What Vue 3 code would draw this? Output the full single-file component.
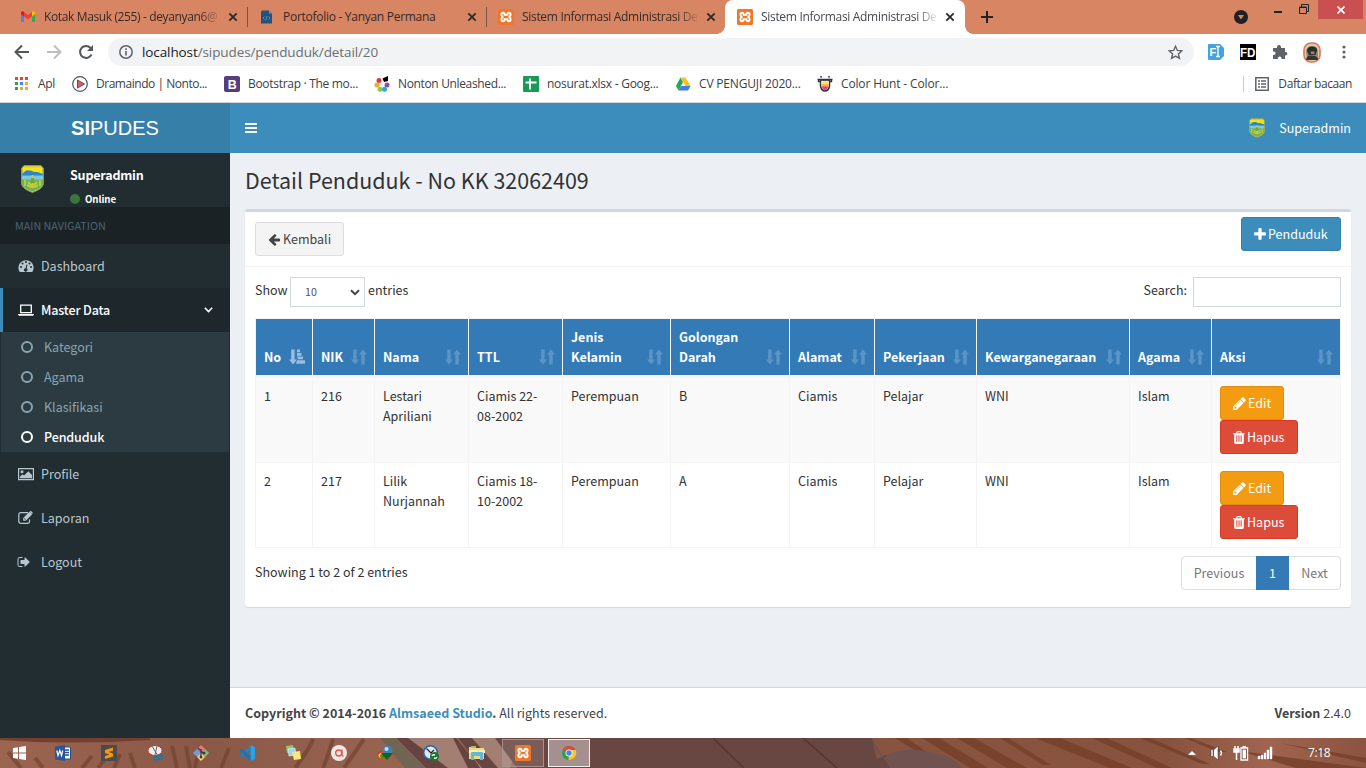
<script setup>
import { h } from 'vue'

const fa = {
  left: 'M1664 896v128q0 53-32.5 90.5t-84.5 37.5h-704l293 294q38 36 38 90t-38 90l-75 76q-37 37-90 37-52 0-91-37l-651-652q-37-37-37-90 0-52 37-91l651-650q38-38 91-38 52 0 90 38l75 74q38 38 38 91t-38 91l-293 293h704q52 0 84.5 37.5t32.5 90.5z',
  plus: 'M1600 736v192q0 40-28 68t-68 28h-416v416q0 40-28 68t-68 28h-192q-40 0-68-28t-28-68v-416h-416q-40 0-68-28t-28-68v-192q0-40 28-68t68-28h416v-416q0-40 28-68t68-28h192q40 0 68 28t28 68v416h416q40 0 68 28t28 68z',
  pencil: 'M491 1536l91-91-235-235-91 91v107h128v128h107zm523-928q0-22-22-22-10 0-17 7l-542 542q-7 7-7 17 0 22 22 22 10 0 17-7l542-542q7-7 7-17zm-54-192l416 416-832 832h-416v-416zm683 96q0 53-37 90l-166 166-416-416 166-165q36-38 90-38 53 0 91 38l235 234q37 39 37 91z',
  trash: 'M704 1376v-704q0-14-9-23t-23-9h-64q-14 0-23 9t-9 23v704q0 14 9 23t23 9h64q14 0 23-9t9-23zm256 0v-704q0-14-9-23t-23-9h-64q-14 0-23 9t-9 23v704q0 14 9 23t23 9h64q14 0 23-9t9-23zm256 0v-704q0-14-9-23t-23-9h-64q-14 0-23 9t-9 23v704q0 14 9 23t23 9h64q14 0 23-9t9-23zm-544-992h448l-48-117q-7-9-17-11h-317q-10 2-17 11zm928 32v64q0 14-9 23t-23 9h-96v948q0 83-47 143.500t-113 60.500h-832q-66 0-113-58.500t-47-141.500v-952h-96q-14 0-23-9t-9-23v-64q0-14 9-23t23-9h309l70-167q15-37 54-63t79-26h320q40 0 79 26t54 63l70 167h309q14 0 23 9t9 23z',
  logout: 'M704 1440q0 4 1 20t.5 26.500-3 23.500-10 19.500-20.500 6.500h-320q-119 0-203.500-84.500t-84.500-203.500v-704q0-119 84.500-203.500t203.500-84.500h320q13 0 22.500 9.500t9.500 22.500q0 4 1 20t.5 26.500-3 23.500-10 19.500-20.500 6.500h-320q-66 0-113 47t-47 113v704q0 66 47 113t113 47h312l11.500 1 11.500 3 8 5.500 7 9 2 13.500zm928-544q0 26-19 45l-544 544q-19 19-45 19t-45-19-19-45v-288h-448q-26 0-45-19t-19-45v-384q0-26 19-45t45-19h448v-288q0-26 19-45t45-19 45 19l544 544q19 19 19 45z',
}
const boxes = { left: '64 0 1728 1792', plus: '192 0 1408 1792', pencil: '128 0 1536 1792', trash: '192 0 1408 1792', logout: '0 0 1792 1792' }
const Fa = (p) => h('svg', { viewBox: boxes[p.name], width: 14, height: 14, fill: 'currentColor' }, [h('path', { d: fa[p.name] })])
Fa.props = ['name']

const Xampp = () => h('svg', { viewBox: '0 0 16 16', width: 16, height: 16 }, [
  h('rect', { width: 16, height: 16, rx: 1.5, fill: '#f0762a' }),
  h('path', { d: 'M6.600 5.800Q6.600 3.700 5 3.700 3.400 3.700 3.400 5.500 3.400 7 4.600 8 3.400 9 3.400 10.500 3.400 12.300 5 12.300 6.600 12.300 6.600 10.200H9.400Q9.400 12.300 11 12.300 12.600 12.300 12.600 10.500 12.600 9 11.400 8 12.600 7 12.600 5.500 12.600 3.700 11 3.700 9.400 3.700 9.400 5.800Z', fill: 'none', stroke: '#fff', 'stroke-width': 1.9 }),
])

const Crest = () => h('svg', { viewBox: '0 0 23 28' }, [
  h('path', { d: 'M3 .5h17l2.500 3V19q-1 5-11 8.500Q1.500 24 .5 19V3.500z', fill: '#d9ca3e', stroke: '#8d9b62', 'stroke-width': 0.8 }),
  h('path', { d: 'M1 4h21v15q-1 4-10.500 7.600Q2 23 1 19z', fill: '#6cb35a' }),
  h('path', { d: 'M1.500 2.500h20v6h-20z', fill: '#f5e21e' }),
  h('path', { d: 'M1 9.500Q5 4.500 8 5.500q3-.5 5 1.500 4-1 9 2.500V12H1z', fill: '#2d86c8' }),
  h('path', { d: 'M1 10.500h21v4H1z', fill: '#7cc8dc' }),
  h('path', { d: 'M11.500 10v12M7 17q4.500 6 9 0M6 20q5.500 4 11 0M4 15v6M19 15v6', fill: 'none', stroke: '#cdd233', 'stroke-width': 1.6 }),
  h('path', { d: 'M10 13h3v5h-3z', fill: '#8a9a2c' }),
])

const tabs = [
  { id: 'gmail', title: 'Kotak Masuk (255) - deyanyan6@', fade: true },
  { id: 'porto', title: 'Portofolio - Yanyan Permana' },
  { id: 'xampp', title: 'Sistem Informasi Administrasi De', fade: true },
  { id: 'xampp', title: 'Sistem Informasi Administrasi De', fade: true, active: true },
]
const subs = ['Kategori', 'Agama', 'Klasifikasi', 'Penduduk']
const heads = ['No', 'NIK', 'Nama', 'TTL', 'Jenis Kelamin', 'Golongan Darah', 'Alamat', 'Pekerjaan', 'Kewarganegaraan', 'Agama', 'Aksi']
const rows = [
  ['1', '216', 'Lestari Apriliani', 'Ciamis 22-08-2002', 'Perempuan', 'B', 'Ciamis', 'Pelajar', 'WNI', 'Islam'],
  ['2', '217', 'Lilik Nurjannah', 'Ciamis 18-10-2002', 'Perempuan', 'A', 'Ciamis', 'Pelajar', 'WNI', 'Islam'],
]
</script>

<template>
  <div class="screen">
    <div class="tabstrip">
      <div v-for="(t, i) in tabs" :key="i" class="tab" :class="{ active: t.active }">
        <svg v-if="t.id === 'gmail'" class="fav" viewBox="0 0 16 16"><path fill="#4285f4" d="M1 4v9h3V7z" /><path fill="#34a853" d="M12 7v6h3V4z" /><path fill="#ea4335" d="M4 3l4 3 4-3v4.500L8 10.500 4 7.500z" /><path fill="#c5221f" d="M1 4q0-2 2-1.700L4 3v4.500L1 5.300z" /><path fill="#fbbc04" d="M15 4q0-2-2-1.700L12 3v4.500l3-2.200z" /></svg>
        <svg v-else-if="t.id === 'porto'" class="fav" viewBox="0 0 16 16"><path fill="#23527c" d="M3 1.500h7l3 3V14.500H2V2.500z" /><path fill="#6f93b3" d="M10 1.500v3h3z" /><path d="M5.500 7.500L4 9l1.500 1.500M9.500 7.500L11 9l-1.500 1.500M8.200 7L6.800 11" fill="none" stroke="#7794ad" stroke-width=".8" /></svg>
        <Xampp v-else class="fav" />
        <span class="title" :class="{ fade: t.fade }">{{ t.title }}</span>
        <svg class="x" viewBox="0 0 10 10"><path d="M1.300 1.300l7.400 7.400M8.700 1.300L1.300 8.700" stroke="currentColor" stroke-width="1.800" /></svg>
      </div>
      <svg class="newtab" viewBox="0 0 12 12"><path d="M6 0v12M0 6h12" stroke="#222" stroke-width="2" /></svg>
      <div class="winctl">
        <svg class="down" viewBox="0 0 14 14"><circle cx="7" cy="7" r="7" fill="#202124" /><path d="M4 5h6L7 9.500z" fill="#d78562" /></svg>
        <svg class="min" viewBox="0 0 8 2"><path d="M0 0h8v2H0z" fill="#222" /></svg>
        <svg class="rest" viewBox="0 0 10 10"><path d="M.5 3.500h7v6h-7zM.5 3h7M2.500 3V.5h7v7H8" fill="none" stroke="#222" /></svg>
        <div class="close"><svg viewBox="0 0 8 8"><path d="M.5.5l7 7M7.500.5l-7 7" stroke="#fff" stroke-width="1.700" /></svg></div>
      </div>
    </div>

    <div class="toolbar">
      <svg class="nav" viewBox="0 0 16 16"><path d="M15 8H2M8 1.500L1.500 8 8 14.500" fill="none" stroke="#54585c" stroke-width="2" /></svg>
      <svg class="nav" viewBox="0 0 16 16"><path d="M1 8h13M8 1.500L14.500 8 8 14.500" fill="none" stroke="#bcbec0" stroke-width="2" /></svg>
      <svg class="nav" viewBox="0 0 16 16"><path d="M13.500 10.500A6 6 0 1 1 12.600 4" fill="none" stroke="#54585c" stroke-width="2" /><path d="M15 1v6H9z" fill="#54585c" /></svg>
      <div class="omni">
        <svg class="info" viewBox="0 0 14 14"><circle cx="7" cy="7" r="6.200" fill="none" stroke="#5f6368" stroke-width="1.500" /><path d="M6.200 6h1.600v4.500H6.200zM6.200 3.300h1.600v1.600H6.200z" fill="#5f6368" /></svg>
        <span class="url"><b>localhost</b>/sipudes/penduduk/detail/20</span>
        <svg class="star" viewBox="0 0 14 14"><path d="M7 1.200l1.700 3.900 4.200.4-3.200 2.800 1 4.200L7 10.300l-3.700 2.200 1-4.200L1.100 5.500l4.200-.4z" fill="none" stroke="#5f6368" stroke-width="1.300" /></svg>
      </div>
      <div class="ext">
        <svg width="16" height="16" viewBox="0 0 16 16"><path d="M1 0h11l4 4v8l-4 4H1q-1 0-1-1V1q0-1 1-1z" fill="#41a3e0" /><text x="1.500" y="12" font-size="11" font-weight="bold" fill="#fff">F</text><path d="M8 2.500h4M8 12.500h4M10 2.500v10" stroke="#fff" stroke-width="1.300" /></svg>
        <svg width="16" height="16" viewBox="0 0 16 16"><path d="M0 0h16v16H0z" /><text x="0" y="12.500" font-size="12" font-weight="bold" fill="#fff" textLength="15.500" lengthAdjust="spacingAndGlyphs">FD</text></svg>
        <svg width="16" height="16" viewBox="0 0 16 16"><path d="M1 4h4V3a2 2 0 0 1 4 0v1h4v4h.6a1.800 1.800 0 0 1 0 3.600H13V15H9.500v-.8a1.800 1.800 0 0 0-3.600 0v.8H1v-4h.8a1.700 1.700 0 0 0 0-3.500H1z" fill="#5f6368" /></svg>
        <svg width="18" height="21" viewBox="0 0 18 21"><rect x="1" y="1" width="16" height="19" rx="7" fill="#d9cdb8" stroke="#e2724c" stroke-width="1.600" /><path d="M3 10q0-6 6-6t6 6v8H4z" fill="#8f8a72" /><path d="M4 9q0-4.500 5-4.500t5 4L12.500 13H6z" fill="#27302a" /><path d="M7.500 9.500h4v2.500H8z" fill="#a58260" /><path d="M3 18q1-5 4-4.500l5 .5q3 1 3 4z" fill="#34362b" /></svg>
        <svg width="4" height="14" viewBox="0 0 4 14" fill="#5f6368"><circle cx="2" cy="2" r="1.600" /><circle cx="2" cy="7" r="1.600" /><circle cx="2" cy="12" r="1.600" /></svg>
      </div>
    </div>

    <div class="bookmarks">
      <div class="bm b1"><svg viewBox="0 0 14 14"><path fill="#ea4335" d="M0 0h3v3H0zM5 0h3v3H5zM10 0h3v3h-3z" /><path fill="#34a053" d="M0 5h3v3H0zM0 10h3v3H0z" /><path fill="#4285f4" d="M5 5h3v3H5z" /><path fill="#f5a81c" d="M10 5h3v3h-3zM5 10h3v3H5zM10 10h3v3h-3z" /></svg>Apl</div>
      <div class="bm b2"><svg viewBox="0 0 16 16"><circle cx="8" cy="8" r="7.300" fill="#fff" stroke="#50555a" stroke-width="1.200" /><path d="M5.500 4l7 4-7 4z" fill="#e45c63" stroke="#50555a" /></svg>Dramaindo | Nonto...</div>
      <div class="bm b3"><svg viewBox="0 0 16 16"><rect width="16" height="16" rx="2" fill="#563d7c" /><text x="3.700" y="12.600" font-size="12.500" font-weight="bold" fill="#fff">B</text></svg>Bootstrap · The mo...</div>
      <div class="bm b4"><svg viewBox="0 0 16 16"><circle cx="5" cy="4.500" r="2.500" fill="#e2343e" /><circle cx="3" cy="9" r="2.500" fill="#f2a72b" /><circle cx="6" cy="13.300" r="2.500" fill="#91c83e" /><circle cx="10.500" cy="13.300" r="2.500" fill="#29a8df" /><circle cx="13" cy="9" r="2.500" fill="#8c4fa5" /><path d="M8.500 2.500L14 0v5l-4 1z" /><circle cx="8.200" cy="8.700" r="2" fill="#fff" /></svg>Nonton Unleashed...</div>
      <div class="bm b5"><svg viewBox="0 0 16 16"><rect width="16" height="16" rx="1" fill="#169c55" /><path d="M2.500 6.500h11M7 2.500v11" stroke="#fff" stroke-width="2" /></svg>nosurat.xlsx - Goog...</div>
      <div class="bm b6"><svg viewBox="0 0 16 16"><path d="M5.500 1.500L1 10l2.500 4.500L8 6z" fill="#22a55a" /><path d="M5.500 1.500h5L15.500 10h-5z" fill="#fbc01c" /><path d="M5.800 10h9.700L13 14.500H3.500z" fill="#3f7ee8" /></svg>CV PENGUJI 2020...</div>
      <div class="bm b7"><svg viewBox="0 0 16 16"><path d="M3.500 4h9v6q-1 5-4.500 5t-4.500-5z" fill="#fff" stroke="#2d3142" stroke-width="1.500" /><path d="M4.300 5h7.400v3H4.300z" fill="#f9ed52" /><path d="M4.300 8h7.400v3H4.500z" fill="#ffad63" /><path d="M4.800 10.500h6.400q-1 3.500-3.200 3.500t-3.200-3.500z" fill="#e83e72" /><path d="M.5 3.500h15M1.500 3.500v2h2M14.500 3.500v2h-2M3 .8h2M11 .8h2" fill="none" stroke="#2d3142" stroke-width="1.300" /></svg>Color Hunt - Color...</div>
      <div class="reading"><svg viewBox="0 0 14 14"><path d="M.8.8h12.400v12.400H.8z" fill="none" stroke="#5f6368" stroke-width="1.500" /><path d="M3 4h2M6 4h5M3 7h2M6 7h5M3 10h2M6 10h5" stroke="#5f6368" stroke-width="1.500" /></svg>Daftar bacaan</div>
    </div>

    <div class="page">
      <aside>
        <div class="logo"><b>SI</b>PUDES</div>
        <div class="user">
          <Crest class="crest" />
          <div><p class="uname">Superadmin</p><p class="online"><i></i>Online</p></div>
        </div>
        <div class="mainnav">MAIN NAVIGATION</div>
        <div class="item">
          <svg viewBox="0 0 16 14"><path fill="currentColor" fill-rule="evenodd" d="M1.700 13A7.600 7.600 0 1 1 14.300 13zM2 8a1 1 0 1 0 2 0 1 1 0 1 0-2 0M3.500 4.500a1 1 0 1 0 2 0 1 1 0 1 0-2 0M7 3a1 1 0 1 0 2 0 1 1 0 1 0-2 0M10.500 4.500a1 1 0 1 0 2 0 1 1 0 1 0-2 0M12 8a1 1 0 1 0 2 0 1 1 0 1 0-2 0M8.600 5.500L7.500 9.200a1.700 1.700 0 1 0 1.200.3l.8-3.800z" /></svg>
          <span>Dashboard</span>
        </div>
        <div class="item open">
          <svg viewBox="0 0 16 14"><path d="M2.700 2.100h10.600v7.600H2.700z" fill="none" stroke="currentColor" stroke-width="1.300" /><path d="M0 11h16v.7l-1 1H1l-1-1z" fill="currentColor" /></svg>
          <span>Master Data</span>
          <svg class="chev" viewBox="0 0 9 6"><path d="M.8.8l3.700 3.700L8.200.8" fill="none" stroke="#fff" stroke-width="1.600" /></svg>
        </div>
        <div class="submenu">
          <div v-for="s in subs" :key="s" class="sub" :class="{ on: s === 'Penduduk' }"><i></i>{{ s }}</div>
        </div>
        <div class="item">
          <svg viewBox="0 0 16 14"><path d="M.6 1.600h14.800v11H.6z" fill="none" stroke="currentColor" stroke-width="1.200" /><circle cx="4" cy="4.700" r="1.500" fill="currentColor" /><path d="M2 11.300V9.500l2.500-2.300L6 8.500l4.300-4.200L14 8v3.300z" fill="currentColor" /></svg>
          <span>Profile</span>
        </div>
        <div class="item">
          <svg viewBox="0 0 16 14"><path d="M10 1.600H3Q.8 1.600.8 3.700v6.500q0 2.100 2.200 2.100h6.300q2.200 0 2.200-2.100V8.400" fill="none" stroke="currentColor" stroke-width="1.200" /><path d="M5.200 9.700V7L11.400.8l2.600 2.600L7.900 9.700zM12 .3q.8-.6 1.400 0l1 1q.7.800 0 1.400l-.4.400L11.600.7z" fill="currentColor" /><path d="M6.200 7.500l1.400 1.400" stroke="#222d32" /></svg>
          <span>Laporan</span>
        </div>
        <div class="item"><Fa name="logout" class="out" /><span>Logout</span></div>
      </aside>

      <main>
        <nav>
          <svg class="bars" viewBox="0 0 12 10"><path d="M0 0h12v2H0zM0 4h12v2H0zM0 8h12v2H0z" fill="#fff" /></svg>
          <div class="who"><Crest class="mini" />Superadmin</div>
        </nav>
        <section>
          <h1>Detail Penduduk - No KK 32062409</h1>
          <div class="box">
            <div class="boxhead">
              <button class="btn back"><Fa name="left" /> Kembali</button>
              <button class="btn add"><Fa name="plus" /> Penduduk</button>
            </div>
            <div class="controls">
              <span>Show</span>
              <div class="select">10<svg viewBox="0 0 10 7"><path d="M1 1.200l4 4 4-4" fill="none" stroke="#444" stroke-width="2" /></svg></div>
              <span>entries</span>
              <span class="search">Search:</span><div class="field"></div>
            </div>
            <table>
              <colgroup><col v-for="(c, i) in heads" :key="c" :class="'c' + i" /></colgroup>
              <thead>
                <tr>
                  <th v-for="(c, i) in heads" :key="c"><div class="th"><span>{{ c }}</span>
                    <svg v-if="i === 0" class="asc" viewBox="0 0 16 16"><path d="M2.200.5h3.400v10H8L4 15.500 0 10.500h2.200zM8 .5h3v2.700H8zM8 4h4.500v2.700H8zM8 7.600h6v2.700H9zM8 11.200h8v3.500H7z" fill="#fff" /></svg>
                    <svg v-else viewBox="0 0 16 16"><path d="M2.200.5h3.400v10H8L4 15.500 0 10.500h2.200zM10.300 15.500h3.400V5.500H16L12 .5 8 5.500h2.300z" fill="#fff" /></svg>
                  </div></th>
                </tr>
              </thead>
              <tbody>
                <tr v-for="r in rows" :key="r[0]">
                  <td v-for="(c, i) in r" :key="i">{{ c }}</td>
                  <td class="act"><button class="btn edit"><Fa name="pencil" /> Edit</button><button class="btn del"><Fa name="trash" /> Hapus</button></td>
                </tr>
              </tbody>
            </table>
            <div class="foot">
              <span class="showing">Showing 1 to 2 of 2 entries</span>
              <div class="pager"><span class="prev">Previous</span><span class="cur">1</span><span class="next">Next</span></div>
            </div>
          </div>
        </section>
        <footer><span><b>Copyright © 2014-2016 <em>Almsaeed Studio</em>.</b> All rights reserved.</span><span class="ver"><b>Version</b> 2.4.0</span></footer>
      </main>
    </div>

    <div class="taskbar">
      <svg class="wall" viewBox="0 0 1366 30" preserveAspectRatio="none">
        <defs>
          <linearGradient id="wg" x1="0" x2="1"><stop offset="0" stop-color="#9c6550" /><stop offset=".15" stop-color="#8a5847" /><stop offset=".28" stop-color="#966450" /><stop offset="1" stop-color="#8c5842" /></linearGradient>
          <linearGradient id="wr" x1="0" x2="1"><stop offset="0" stop-color="#87543f" /><stop offset=".6" stop-color="#87533e" /><stop offset=".8" stop-color="#a06450" /><stop offset="1" stop-color="#8a5440" /></linearGradient>
        </defs>
        <path d="M0 0h1366v30H0z" fill="url(#wg)" />
        <path d="M0 2q70 5 150 0v-2H0z" fill="#743f2e" />
        <g stroke="#6f4030" stroke-width="4" fill="none" opacity=".65"><path d="M8 14l13 16M35 20l8 10M82 30l10-12M98 30l10-13M114 30l6-14M135 30l-5-15M172 8l5 22M186 8l4 22M198 14l-3 16M221 30l8-20M295 30q15-20 18-29M323 30q7-18 10-29M344 30l20-29" /></g>
        <path d="M380 0h15l30 30h-20z" fill="#706453" />
        <path d="M396 0h60l25 30h-55z" fill="#654340" />
        <path d="M408 0h45l15 30h-20zM462 0h58l-10 30h-30z" fill="#a27e73" />
        <path d="M458 0h14l26 30h-16z" fill="#684543" />
        <path d="M495 0l22 30h375V0z" fill="#684743" />
        <path d="M713 0l31 30M803 0l34 30" stroke="#55352f" stroke-width="1.500" />
        <path d="M872 0h494v30H960q-30-20-75-13l-8 4z" fill="url(#wr)" />
        <g fill="#743e29" opacity=".8"><path d="M895 0h12l24 17h-9zM922 0h17l49 30h-18zM957 0h17l53 30h-20zM1000 0h8l43 27h-8zM1035 0h25l72 30h-22zM1092 0h15l65 30h-15zM1140 0h10l60 26h-8zM1185 0h6l36 14h-9zM1240 13l126 17h-70zM1280 5l86 15v5z" /></g>
        <path d="M872 0q5 22 13 19 15-13 55-3 15 4 22 14H890z" fill="#705350" />
      </svg>
      <div class="slot start"><svg viewBox="0 0 16 16"><path d="M2 3l5-.8v5.300H2zM8 2l7-1v6.500H8zM2 8.500h5v5.300L2 13zM8 8.500h7V15l-7-1z" fill="#fff" /></svg></div>
      <div class="slot"><svg viewBox="0 0 16 16"><path d="M8 2h7.500v12H8z" fill="#fff" stroke="#244f8f" /><path d="M9 5h5M9 7.500h5M9 10h5" stroke="#244f8f" stroke-width="1.300" /><path d="M0 1.500L10 0v16L0 14.500z" fill="#2b579a" /><path d="M1.800 5.500L3 10.500l1.800-5 1.700 5 1.200-5" stroke="#fff" stroke-width="1.200" fill="none" /></svg></div>
      <div class="slot"><svg viewBox="0 0 16 16"><path d="M0 0h16v16H0z" fill="#4b4b4b" /><path d="M12 2.500v3L7.500 7l4.500 1.500v3L4 14v-3l4.500-1.500L4 8V5z" fill="#ff9800" /></svg></div>
      <div class="slot"><svg viewBox="0 0 16 16"><ellipse cx="8" cy="5.500" rx="7" ry="5" fill="#f0efed" stroke="#c23d2f" /><path d="M5 1l6 10M10 1L8 10" stroke="#666" /><circle cx="9.500" cy="13" r="2" fill="none" stroke="#1977a9" stroke-width="1.500" /><circle cx="13.500" cy="12" r="2" fill="none" stroke="#1977a9" stroke-width="1.500" /></svg></div>
      <div class="slot"><svg viewBox="0 0 16 16"><path d="M8 0l4 4-4 4-4-4z" fill="#ed7572" /><path d="M12 4l4 4-4 4-4-4z" fill="#7bc073" /><path d="M4 4l4 4-4 4-4-4z" fill="#6f9cdf" /><path d="M8 8l4 4-4 4-4-4z" fill="#f0dd72" /><path d="M8 4v8M5 3l5 5" stroke="#4b3540" stroke-width="1.300" /><circle cx="8" cy="12" r="1.500" fill="#4b3540" /><circle cx="11" cy="8" r="1.500" fill="#4b3540" /></svg></div>
      <div class="slot"><svg viewBox="0 0 16 16"><path d="M11.500 0L16 2v12l-4.500 2z" fill="#27a2ec" /><path d="M11.500 0v5L2 12.500.5 11z" fill="#1686d0" /><path d="M11.500 16v-5L2 3.500.5 5z" fill="#1276bd" /></svg></div>
      <div class="slot"><svg viewBox="0 0 16 16"><path d="M1 1l7-1 1 7-7 1z" fill="#8bc676" /><path d="M3 4l7-1 1 7-7 1z" fill="#96d8ef" stroke="#fff" stroke-width=".5" /><path d="M7 7l8-1 1 8-7 1z" fill="#f5e77b" /></svg></div>
      <div class="slot"><svg viewBox="0 0 16 16"><circle cx="8" cy="8" r="8" fill="#ece8e6" /><circle cx="7.700" cy="8" r="3" fill="none" stroke="#e35340" stroke-width="1.300" /><path d="M11 4.500v6l1.500 1" fill="none" stroke="#e35340" stroke-width="1.300" /></svg></div>
      <div class="slot"><svg viewBox="0 0 16 16"><ellipse cx="5" cy="10" rx="5" ry="4" fill="#d93a23" /><ellipse cx="5.500" cy="10.500" rx="4" ry="2.800" fill="#f4d22b" /><ellipse cx="6" cy="11" rx="3" ry="2" fill="#348f2c" /><circle cx="10.500" cy="5.500" r="5" fill="#407fb7" /><circle cx="9.500" cy="4" r="2" fill="#c9dfea" /><path d="M4 8h12l-6 7z" fill="#10661c" /></svg></div>
      <div class="slot"><svg viewBox="0 0 16 16"><circle cx="7.500" cy="7.500" r="6.800" fill="#dce8f2" stroke="#30619b" stroke-width="1.500" /><path d="M3.500 3.500L8 8l3-3" fill="none" stroke="#222" stroke-width="1.200" /><circle cx="11.500" cy="11.500" r="4.500" fill="#17762a" /><path d="M9 11q1-2 3-1M14 12q-1 2-3 1" stroke="#fff" stroke-width="1.400" fill="none" /></svg></div>
      <div class="slot"><svg viewBox="0 0 16 16"><path d="M0 2h6l1 1h8v11H0z" fill="#edd985" /><path d="M2 1h5v2H2z" fill="#a4c45d" /><path d="M0 5h16v3H0z" fill="#f7eeb4" /><path d="M2 15V8q0-1 1-1h10q1 0 1 1v7h-3v-4H5v4z" fill="#61b9dd" /></svg></div>
      <div class="slot win"><Xampp /></div>
      <div class="slot win front"><svg viewBox="0 0 16 16"><circle cx="8" cy="8" r="7" fill="#2da14b" /><path d="M8 8L1.900 4.500A7 7 0 0 1 14.300 5z" fill="#e24739" /><path d="M8 8l3-3h3.500A7 7 0 0 1 7.500 15z" fill="#fbc834" /><circle cx="8" cy="8" r="3.500" fill="#fff" /><circle cx="8" cy="8" r="2.700" fill="#4285f4" /></svg></div>
      <div class="tray">
        <svg width="8" height="4" viewBox="0 0 8 4"><path d="M4 0l4 4H0z" fill="#fff" /></svg>
        <svg class="vol" width="14" height="16" viewBox="0 0 14 16"><path d="M1 4.500h2v7H1zM3.500 5L8 1v14l-4.500-4z" fill="#fff" stroke="#3a2822" stroke-width=".5" /><path d="M10.500 5.500q2 2.500 0 5" fill="none" stroke="#fff" stroke-width="1.300" /></svg>
        <svg class="bat" width="16" height="16" viewBox="0 0 16 16"><path d="M1 4h5v3H1zM2 1v3M5 1v3M3.500 7v8" stroke="#fff" stroke-width="1.500" fill="#fff" /><path d="M8 3h6.500v12H8z" fill="#5b3c30" stroke="#fff" stroke-width="1.400" /><path d="M9.500 4.500H13v9H9.500zM9.500 1H13v2H9.500z" fill="#fff" /></svg>
        <svg class="sig" width="16" height="14" viewBox="0 0 16 14"><path d="M1 10h2v3H1zM4 9h2v4H4zM7 7h2v6H7zM10 4h2v9h-2zM13 1h2v12h-2z" fill="#fff" stroke="#fff" stroke-width=".4" /></svg>
        <span class="clock">7:18</span>
      </div>
    </div>
  </div>
</template>

<style>
html, body { margin: 0; overflow: hidden; }
</style>

<style scoped>
* { box-sizing: border-box; }
svg { display: block; flex: none; }
.screen { width: 1366px; height: 768px; display: flex; flex-direction: column; overflow: hidden; background: #fff; font-family: "Noto Sans CJK SC", "Noto Sans", sans-serif; font-size: 12.530px; line-height: 20px; color: #333; }
.tabstrip, .toolbar, .bookmarks, .clock { font-family: "Open Sans", "Noto Sans", sans-serif; font-size: 12px; white-space: nowrap; }
.tabstrip { height: 34px; background: #d78562; display: flex; align-items: center; padding-left: 8px; color: #352a27; }
.tab { width: 239px; height: 34px; padding: 0 9px 0 12px; display: flex; align-items: center; position: relative; letter-spacing: -.37px; }
.tab:nth-child(2) { letter-spacing: -.28px; }
.tab:nth-child(3), .tab:nth-child(4) { letter-spacing: -.31px; }
.tab:first-child::after, .tab:nth-child(2)::after { content: ""; position: absolute; right: -1px; top: 7px; width: 1px; height: 20px; background: #7c5240; }
.tab.active { background: #fff; border-radius: 8px 8px 0 0; width: 240px; color: #45494d; }
.tab.active::before, .tab.active::after { content: ""; position: absolute; bottom: 0; width: 8px; height: 8px; }
.tab.active::before { left: -8px; background: radial-gradient(circle at 0 0, transparent 7.500px, #fff 8px); }
.tab.active::after { right: -8px; background: radial-gradient(circle at 100% 0, transparent 7.500px, #fff 8px); }
.fav { width: 16px; height: 16px; margin-right: 8px; }
.title { width: 176px; overflow: hidden; }
.title.fade { -webkit-mask-image: linear-gradient(90deg, #000 155px, transparent 178px); mask-image: linear-gradient(90deg, #000 155px, transparent 178px); }
.x { width: 10px; height: 10px; margin-left: 7px; color: #2c2a29; }
.tab .x { margin-left: 7px; position: relative; left: 1px; }
.newtab { width: 12px; height: 12px; margin-left: 16px; }
.winctl { margin-left: auto; align-self: flex-start; display: flex; height: 34px; padding-right: 3px; }
.down { width: 14px; height: 14px; margin: 10px 26px 0 0; }
.min { width: 8px; height: 2px; margin: 11px 17px 0 0; }
.rest { width: 10px; height: 10px; margin: 4px 9px 0 0; }
.close { width: 45px; height: 19px; background: #c94f50; display: grid; place-items: center; }
.close svg { width: 8px; height: 8px; }
.toolbar { height: 36px; padding: 0 20px 0 14px; display: flex; align-items: center; }
.nav { width: 16px; height: 16px; margin-right: 16px; }
.omni { width: 1086px; height: 28px; margin-left: -2px; border-radius: 14px; background: #f1f3f4; display: flex; align-items: center; padding: 0 11px; }
.info { width: 14px; height: 14px; margin-right: 9px; }
.url { font-size: 13.500px; letter-spacing: -.1px; color: #6b6f73; }
.url b { font-weight: 400; color: #202124; }
.star { width: 15px; height: 15px; margin-left: auto; }
.ext { flex: 1; display: flex; align-items: center; margin-left: 14px; gap: 16px; font-family: "Liberation Sans", sans-serif; }
.ext svg:last-child { margin-left: 5px; }
.ext svg:nth-child(4) { margin-left: -1px; }
.bookmarks { height: 33px; border-bottom: 1px solid #d5d5d5; display: flex; align-items: center; padding: 0 14px 4px; color: #3c4043; letter-spacing: -.3px; }
.bm { display: flex; align-items: center; gap: 8px; }
.bm svg { width: 16px; height: 16px; font-family: "Liberation Sans", sans-serif; letter-spacing: 0; }
.b1 { width: 58px; gap: 9px; }
.b1 svg { width: 14px; height: 14px; margin-left: 1px; }
.b2 { width: 152px; letter-spacing: -.47px; }
.b3 { width: 150px; }
.b4 { width: 149px; letter-spacing: -.35px; }
.b5 { width: 152px; letter-spacing: -.26px; }
.b6 { width: 142px; letter-spacing: -.17px; }
.b7 { letter-spacing: -.15px; }
.reading { margin-left: auto; display: flex; align-items: center; gap: 9px; border-left: 1px solid #ccc; height: 16px; padding-left: 11px; letter-spacing: -.4px; }
.reading svg { width: 14px; height: 14px; }
.page { height: 635px; display: flex; }
aside { width: 230px; background: #222d32; color: #b8c7ce; }
.logo { height: 50px; background: #367fa9; color: #fff; font: 20px/50px "Liberation Sans", Arial, sans-serif; text-align: center; }
.user { height: 54px; display: flex; padding-left: 21px; color: #fff; font-weight: 600; }
.crest { width: 23px; height: 28px; margin: 12px 26px 0 0; }
.uname { margin: 12px 0 5px; line-height: 20px; letter-spacing: -.2px; }
.online { margin: 0; font-size: 9.700px; line-height: 18px; display: flex; align-items: center; letter-spacing: -.1px; }
.online i { width: 10px; height: 10px; border-radius: 50%; background: #3c763d; margin-right: 5px; }
.mainnav { height: 37px; background: #1a2226; color: #4b646f; font-size: 10.750px; line-height: 37px; padding-left: 15px; }
.item { height: 44px; display: flex; align-items: center; border-left: 3px solid transparent; padding: 0 15px; }
.item > svg { width: 16px; height: 14px; }
.item > .out { width: 14px; margin-right: 2px; margin-left: -1px; }
.item > .out + span { margin-left: 8px; }
.item span { margin-left: 7px; }
.item.open { background: #1e282c; border-left-color: #3c8dbc; color: #fff; font-weight: 500; letter-spacing: -.15px; padding-right: 17px; }
.item > .chev { width: 9px; height: 6px; margin-left: auto; }
.submenu { background: #2c3b41; margin: 0 1px; }
.sub { height: 30px; display: flex; align-items: center; padding-left: 20px; color: #8aa4af; }
.sub i { width: 12px; height: 12px; border: 2px solid; border-radius: 50%; margin-right: 11px; }
.sub.on { color: #fff; font-weight: 500; letter-spacing: -.12px; }
main { flex: 1; display: flex; flex-direction: column; background: #ecf0f5; }
nav { height: 50px; background: #3c8dbc; display: flex; align-items: center; justify-content: space-between; padding: 0 15px; color: #fff; }
.bars { width: 12px; height: 10px; }
.who { display: flex; align-items: center; }
.mini { width: 16px; height: 20px; margin-right: 14px; }
section { flex: 1; padding: 14px 15px 0; }
h1 { margin: 0; font-size: 21.480px; font-weight: 400; line-height: 26px; height: 42px; }
.box { height: 398px; border-top: 3px solid #d2d6de; border-radius: 3px; background: #fff; box-shadow: 0 1px 1px rgba(0, 0, 0, .1); }
.boxhead { height: 55px; display: flex; justify-content: space-between; align-items: flex-start; padding: 5px 10px 0; border-bottom: 1px solid #f4f4f4; }
.btn { display: flex; align-items: center; height: 34px; padding: 0 12px; border: 1px solid; border-radius: 3px; font: inherit; line-height: 20px; color: #fff; white-space: nowrap; }
.btn svg { width: 12px; height: 15px; margin-right: 2px; }
.back { margin-top: 5px; width: 89px; background: #f4f4f4; border-color: #ddd; color: #444; }
.back svg { width: 13px; }
.add { width: 100px; background: #3c8dbc; border-color: #367fa9; }
.controls { height: 51px; display: flex; align-items: flex-start; padding: 10px 10px 0; line-height: 26px; }
.controls > span:first-child { width: 35px; }
.select { width: 75px; height: 30px; border: 1px solid #d2d6de; padding: 0 4px 0 14px; display: flex; align-items: center; justify-content: space-between; font-size: 10.700px; color: #555; margin-right: 3px; }
.select svg { width: 10px; height: 7px; }
.search { margin-left: auto; margin-right: 6px; }
.field { width: 148px; height: 30px; border: 1px solid #d2d6de; }
table { width: 1086px; margin-left: 10px; table-layout: fixed; border-collapse: separate; border-spacing: 0; border-left: 1px solid #f4f4f4; border-top: 1px solid #f4f4f4; }
.c0 { width: 57px; } .c1 { width: 62px; } .c2 { width: 94px; } .c3 { width: 94px; } .c4 { width: 108px; } .c5 { width: 119px; }
.c6 { width: 85px; } .c7 { width: 102px; } .c8 { width: 153px; } .c9 { width: 82px; } .c10 { width: 129px; }
th { height: 59px; padding: 8px; text-align: left; vertical-align: bottom; background: #337ab7; background-clip: padding-box; color: #fff; border-right: 1px solid #f4f4f4; border-bottom: 3px solid #f4f4f4; font-weight: 700; }
.th { display: flex; align-items: flex-end; justify-content: space-between; position: relative; }
.th svg { position: absolute; right: -1px; bottom: 2px; width: 16px; height: 16px; opacity: .2; }
.th .asc { opacity: .5; }
th:nth-child(5) span, th:nth-child(6) span { width: 62px; }
td { height: 85px; padding: 8px; vertical-align: top; border-right: 1px solid #f4f4f4; border-bottom: 1px solid #f4f4f4; }
tbody tr:first-child td { background: #f9f9f9; }
.edit { background: #f39c12; border-color: #e08e0b; width: 64px; }
.edit svg { width: 13px; }
.del { background: #dd4b39; border-color: #d73925; width: 78px; }
.foot { display: flex; justify-content: space-between; padding: 8px 10px 0; line-height: 34px; }
.showing { line-height: 32px; }
.pager { display: flex; width: 160px; height: 34px; border: 1px solid #ddd; border-radius: 4px; line-height: 32px; color: #777; }
.pager span { text-align: center; }
.prev { width: 74px; }
.cur { width: 33px; margin: -1px 0; line-height: 34px; background: #337ab7; color: #fff; }
.next { width: 51px; }
footer { height: 51px; background: #fff; border-top: 1px solid #d2d6de; padding: 0 15px; display: flex; justify-content: space-between; line-height: 49px; color: #444; }
footer em { font-style: normal; color: #3c8dbc; }
.taskbar { height: 30px; position: relative; display: flex; align-items: center; overflow: hidden; }
.wall { position: absolute; inset: 0; width: 100%; height: 100%; }
.slot { position: relative; width: 42px; height: 28px; margin-right: 4px; display: grid; place-items: center; }
.slot.start { margin-left: -2px; margin-right: 2px; }
.slot svg { width: 16px; height: 16px; }
.win { border: 1px solid #a5908c; background: rgba(255, 255, 255, .12); }
.front { border-color: #f4eeee; background: rgba(255, 255, 255, .4); }
.tray { position: relative; margin-left: auto; display: flex; align-items: center; color: #fff; padding-right: 36px; }
.vol { margin-left: 14px; }
.bat { margin-left: 9px; }
.sig { margin-left: 8px; }
.clock { margin-left: 35px; letter-spacing: -.4px; width: 22px; }
</style>
